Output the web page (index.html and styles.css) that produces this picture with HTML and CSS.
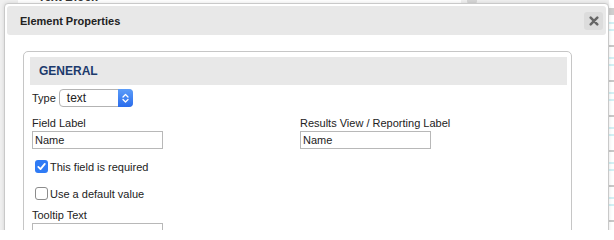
FILE: index.html
```html
<!DOCTYPE html>
<html>
<head>
<meta charset="utf-8">
<link rel="stylesheet" href="styles.css">
</head>
<body>
<div class="page">
<div class="backdrop">
  <div class="bg-block"><span>Text Block</span></div>
  <div class="bg-thumb"></div>
  <div class="bg-list"></div>
</div>
<div class="dialog">
  <div class="titlebar">
    <span class="title">Element Properties</span>
    <button class="close" type="button"><svg width="10" height="10" viewBox="0 0 10 10"><path d="M1.7 1.7 L8.3 8.3 M8.3 1.7 L1.7 8.3" stroke="#666" stroke-width="2.5" stroke-linecap="round"/></svg></button>
  </div>
  <div class="content">
    <div class="fieldset">
      <div class="legend">GENERAL</div>
      <div class="fields">
        <div class="type-row">
          <span>Type</span>
          <div class="select">
            <span class="sel-text">text</span>
            <span class="stepper"><svg width="15" height="18" viewBox="0 0 15 18"><path d="M5 8 L7.5 5.5 L10 8 M5 10.5 L7.5 13 L10 10.5" fill="none" stroke="#fff" stroke-width="1.3" stroke-linecap="round" stroke-linejoin="round"/></svg></span>
          </div>
        </div>
        <div class="grid">
          <div class="field"><label class="lbl">Field Label</label><input class="txt" type="text" value="Name"></div>
          <div class="field"><label class="lbl">Results View / Reporting Label</label><input class="txt" type="text" value="Name"></div>
        </div>
        <label class="check first"><span class="box checked"><svg width="13" height="13" viewBox="0 0 13 13"><path d="M3.3 6.9 L5.5 9.1 L9.8 3.9" fill="none" stroke="#fff" stroke-width="1.8" stroke-linecap="round" stroke-linejoin="round"/></svg></span>This field is required</label>
        <label class="check second"><span class="box"></span>Use a default value</label>
        <div class="field tooltip"><label class="lbl">Tooltip Text</label><input class="txt" type="text"></div>
      </div>
    </div>
  </div>
</div>
</div>
</body>
</html>
```
FILE: styles.css
```css
html, body {
  margin: 0;
  padding: 0;
  overflow: hidden;
}
body {
  font-family: "Liberation Sans", Arial, sans-serif;
  font-size: 11px;
  color: #222;
}
.page {
  position: relative;
  width: 614px;
  height: 230px;
  overflow: hidden;
  background: #f0f0f0;
}
.backdrop {
  display: flex;
  align-items: flex-start;
  height: 230px;
}
.bg-block {
  margin-left: 18px;
  width: 443px;
  height: 3px;
  background: #fff;
  overflow: hidden;
}
.bg-block span {
  display: block;
  margin-top: -10px;
  padding-left: 20px;
  font-size: 12px;
  font-weight: bold;
  color: #333;
}
.bg-thumb {
  margin-left: 6px;
  width: 10px;
  height: 4px;
  background: #d6d6d6;
  border-radius: 0 0 3px 3px;
}
.bg-list {
  margin-left: auto;
  width: 5px;
  height: 230px;
  background:
    linear-gradient(#fff 0 8px, #cfcfcf 8px 15px, transparent 15px),
    repeating-linear-gradient(#fff 0 10px, #c8c8c8 10px 12px, #fff 12px 22px, #d2f1f5 22px 24px, #fff 24px 29px, #d2f1f5 29px 31px, #fff 31px 35px);
}
.dialog {
  position: absolute;
  left: 4px;
  top: 3px;
  width: 605px;
  height: 240px;
  box-sizing: border-box;
  border: 1px solid #c9c9c9;
  border-radius: 4px;
  padding: 2px;
  background: #fff;
  box-shadow: 0 0 4px rgba(0, 0, 0, 0.12);
}
.titlebar {
  height: 29px;
  box-sizing: border-box;
  background: #e8e8e8;
  border-radius: 3px;
  display: flex;
  align-items: center;
  justify-content: space-between;
  padding: 0 3px 0 13px;
}
.title {
  font-weight: bold;
  font-size: 11px;
  color: #222;
}
.close {
  width: 19px;
  height: 18px;
  border: none;
  padding: 0;
  margin: 0;
  background: #dcdcdc;
  border-radius: 3px;
  display: flex;
  align-items: center;
  justify-content: center;
}
.content {
  padding: 16px 34px 0 16px;
}
.fieldset {
  border: 1px solid #c6c6c6;
  border-radius: 5px;
  padding: 5px 4px 20px 6px;
}
.legend {
  height: 28px;
  line-height: 28px;
  padding-left: 9px;
  background: #e8e8e8;
  font-size: 12px;
  font-weight: bold;
  color: #1c3a6c;
}
.fields {
  padding: 4px 0 0 2px;
}
.type-row {
  display: flex;
  align-items: center;
  gap: 3px;
  height: 18px;
}
.select {
  width: 74px;
  height: 18px;
  box-sizing: border-box;
  border: 1px solid #b3b3b3;
  border-radius: 4px;
  display: flex;
  background: #fff;
}
.sel-text {
  flex: 1;
  padding-left: 7px;
  font-size: 12px;
  line-height: 16px;
  color: #222;
}
.stepper {
  width: 15px;
  margin: -1px -1px -1px 0;
  border-radius: 0 4px 4px 0;
  background: linear-gradient(#5c9df9, #2a6cec);
  display: flex;
}
.grid {
  margin-top: 10px;
  display: grid;
  grid-template-columns: 268px 1fr;
}
.lbl {
  display: block;
  line-height: 13px;
  margin-bottom: 1px;
}
.txt {
  display: block;
  width: 131px;
  height: 18px;
  box-sizing: border-box;
  border: 1px solid #b8b8b8;
  border-radius: 0;
  padding: 0 2px;
  margin: 0;
  font-family: "Liberation Sans", Arial, sans-serif;
  font-size: 11px;
  color: #222;
  background: #fff;
}
.check {
  display: flex;
  align-items: center;
  height: 13px;
  margin-left: 3px;
}
.check.first {
  margin-top: 11px;
}
.check.second {
  margin-top: 14px;
}
.box {
  width: 13px;
  height: 13px;
  box-sizing: border-box;
  border: 1px solid #8c8c8c;
  border-radius: 3px;
  background: #fff;
  margin-right: 2px;
  display: flex;
}
.box.checked {
  border: none;
  background: #2f7bf5;
}
.tooltip {
  margin-top: 9px;
}
```
